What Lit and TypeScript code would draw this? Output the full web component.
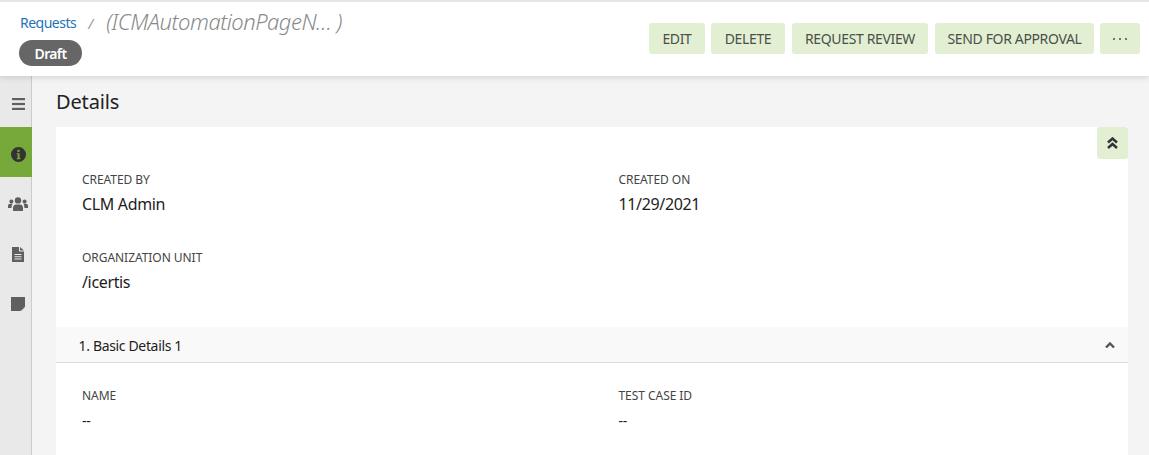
import { LitElement, html, css } from "lit";
import { customElement } from "lit/decorators.js";

@customElement("app-root")
export class AppRoot extends LitElement {
  static styles = css`
    :host { display: block; width: 1149px; height: 455px; overflow: hidden; background: #f4f4f4; font-family: "Noto Sans", "Open Sans", sans-serif; color: #222; }
    * { box-sizing: border-box; }
    .header { position: relative; z-index: 2; height: 76px; background: #fff; border-top: 2px solid #e6e6e6; box-shadow: 0 2px 6px rgba(0,0,0,.12); display: flex; justify-content: space-between; padding: 0 9px 0 20px; }
    .crumbs { display: flex; flex-direction: column; align-items: flex-start; }
    .crumb-row { display: flex; align-items: flex-start; height: 38px; padding-top: 4px; }
    .link { color: #1f72b8; font-size: 14px; line-height: 19px; margin-top: 7px; letter-spacing: -.5px; }
    .sep { color: #999; font-size: 14px; line-height: 19px; margin: 8px 13px 0 12px; font-style: italic; }
    .title { color: #8a8a8a; font-size: 22px; font-style: italic; font-weight: 300; letter-spacing: -.5px; }
    .chip { height: 26px; width: 63px; margin-left: -1px; border-radius: 13px; background: #666; color: #fff; font-size: 14px; font-weight: 600; letter-spacing: -.65px; display: flex; align-items: center; justify-content: center; }
    .actions { display: flex; gap: 6px; padding-top: 21px; }
    .btn { height: 31px; background: #e2efd3; border-radius: 3px; color: #4a4f48; font-size: 14px; letter-spacing: -.36px; display: flex; align-items: center; justify-content: center; }
    .b1 { width: 56px; } .b2 { width: 74px; } .b3 { width: 136px; margin-left: 1px; } .b4 { width: 159px; margin-left: 1px; } .b5 { width: 40px; }
    .body { display: flex; height: 379px; }
    .side { width: 32px; background: #e9e9e9; border-right: 1px solid #ccc; display: flex; flex-direction: column; flex: none; }
    .si { height: 50px; padding: 4px 0 0 5px; display: flex; align-items: center; justify-content: center; color: #5f5f5f; }
    .si.menu { height: 51px; }
    .si.on { background: #76a83a; color: #333; margin-right: -1px; }
    .main { flex: 1; padding: 0 21px 0 24px; }
    h1 { margin: 0; height: 51px; display: flex; align-items: center; font-size: 20px; font-weight: 400; letter-spacing: -.15px; color: #222; }
    .card { background: #fff; height: 328px; position: relative; }
    .collapse { position: absolute; top: 0; right: 0; width: 31px; height: 32px; background: #e2efd3; border-radius: 3px; display: flex; align-items: center; justify-content: center; }
    .grid { display: grid; grid-template-columns: 536.5px 1fr; padding: 45px 26px 0; row-gap: 34px; }
    .label { font-size: 12px; color: #444; line-height: 16px; letter-spacing: -.05px; }
    .value { font-size: 16px; color: #1d1d1d; line-height: 24px; margin-top: 4px; letter-spacing: -.35px; }
    .section { margin-top: 33px; height: 36px; background: #f9f9f9; border-bottom: 1px solid #ddd; display: flex; align-items: center; justify-content: space-between; padding: 1px 13px 0 22.5px; font-size: 14px; letter-spacing: -.34px; color: #1d1d1d; }
    .grid.two { padding-top: 25px; }
    .grid.two .value { font-size: 14px; margin-top: 5px; }
    svg { display: block; }
    .fill { fill: currentColor; }
  `;

  render() {
    return html`
      <div class="header">
        <div class="crumbs">
          <div class="crumb-row">
            <span class="link">Requests</span><span class="sep">/</span><span class="title">(ICMAutomationPageN… )</span>
          </div>
          <div class="chip">Draft</div>
        </div>
        <div class="actions">
          <div class="btn b1">EDIT</div>
          <div class="btn b2">DELETE</div>
          <div class="btn b3">REQUEST REVIEW</div>
          <div class="btn b4">SEND FOR APPROVAL</div>
          <div class="btn b5">
            <svg class="fill" width="16" height="4" viewBox="0 0 16 4"><circle cx="2" cy="2" r="1"/><circle cx="8" cy="2" r="1"/><circle cx="14" cy="2" r="1"/></svg>
          </div>
        </div>
      </div>
      <div class="body">
        <div class="side">
          <div class="si menu">
            <svg class="fill" width="13" height="12" viewBox="0 0 13 12"><rect y="0" width="13" height="2.2"/><rect y="4.9" width="13" height="2.2"/><rect y="9.8" width="13" height="2.2"/></svg>
          </div>
          <div class="si on">
            <svg class="fill" width="15" height="15" viewBox="0 0 14 14"><path fill-rule="evenodd" d="M7 0a7 7 0 1 0 0 14A7 7 0 0 0 7 0zM6 2.6h2v2H6zM5.4 5.8H8v4.4h.8v1.2H5.4v-1.2h.8V7h-.8z"/></svg>
          </div>
          <div class="si">
            <svg class="fill" width="20" height="14" viewBox="0 0 20 14"><circle cx="10" cy="3.4" r="3.2"/><path d="M5 14v-3.2C5 8.6 6.6 7.4 8 7.4h4c1.4 0 3 1.2 3 3.4V14z"/><circle cx="3.4" cy="4.6" r="2"/><circle cx="16.6" cy="4.6" r="2"/><path d="M0 11V9c0-1.4 1-2.2 2-2.2h2.6C4 7.6 3.6 8.8 3.6 10.6V11zM20 11V9c0-1.4-1-2.2-2-2.2h-2.6c.6.8 1 2 1 3.8v.4z"/></svg>
          </div>
          <div class="si">
            <svg class="fill" width="12" height="15" viewBox="0 0 12 15"><path fill-rule="evenodd" d="M0 0h7v4.5h5V15H0zM8 0l4 3.6H8zM2.5 7v1h7V7zM2.5 9.2v1h7v-1zM2.5 11.4v1h7v-1z"/></svg>
          </div>
          <div class="si">
            <svg class="fill" width="14" height="14" viewBox="0 0 14 14"><path d="M0 0h14v9.5L9.5 14H0z"/><path d="M10.5 14v-3.5H14z" opacity=".45"/></svg>
          </div>
        </div>
        <div class="main">
          <h1>Details</h1>
          <div class="card">
            <div class="collapse">
              <svg width="11" height="12" viewBox="0 0 11 12" fill="none" stroke="#333" stroke-width="2.5"><path d="M1 5.5l4.5-4 4.5 4M1 11l4.5-4 4.5 4"/></svg>
            </div>
            <div class="grid">
              <div><div class="label">CREATED BY</div><div class="value">CLM Admin</div></div>
              <div><div class="label">CREATED ON</div><div class="value">11/29/2021</div></div>
              <div><div class="label">ORGANIZATION UNIT</div><div class="value">/icertis</div></div>
            </div>
            <div class="section">
              <span>1. Basic Details 1</span>
              <svg width="10" height="6" viewBox="0 0 10 6" fill="none" stroke="#555" stroke-width="2.4"><path d="M1 5.5l4-4 4 4"/></svg>
            </div>
            <div class="grid two">
              <div><div class="label">NAME</div><div class="value">--</div></div>
              <div><div class="label">TEST CASE ID</div><div class="value">--</div></div>
            </div>
          </div>
        </div>
      </div>
    `;
  }
}
